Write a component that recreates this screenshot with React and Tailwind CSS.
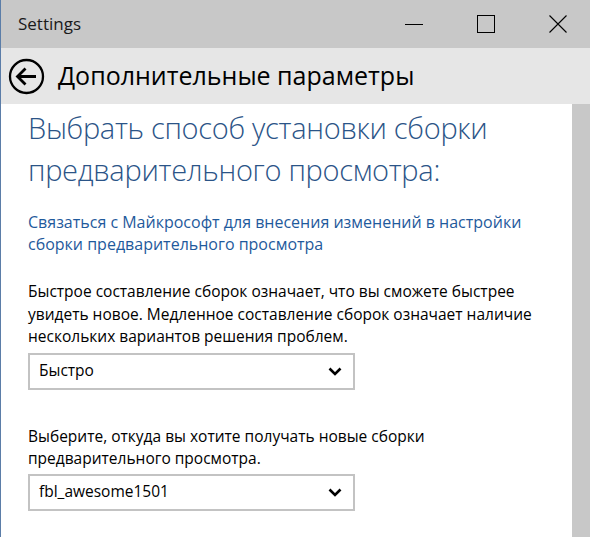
import React from "react"

const font = { fontFamily: '"Open Sans", "Noto Sans", Arial, sans-serif' }

function Chevron() {
  return (
    <svg width="14" height="9" viewBox="0 0 14 9" className="shrink-0">
      <polyline points="1.5,1.5 7,7 12.5,1.5" fill="none" stroke="#000" strokeWidth="2.6" />
    </svg>
  )
}

function Select({ value }) {
  return (
    <div className="w-[327px] h-[37px] border-2 border-[#c3c3c3] bg-white flex items-center justify-between pl-[9px] pr-[11px]">
      <span className="text-[15.5px] text-black leading-none">{value}</span>
      <Chevron />
    </div>
  )
}

export default function App() {
  return (
    <div className="w-[590px] h-[537px] overflow-hidden flex flex-col border-l border-[#5b7da8] bg-white" style={font}>
      {/* title bar */}
      <div className="h-[48px] bg-[#c8c8c8] flex items-center shrink-0">
        <span className="pl-[17px] text-[17px] text-[#1a1a1a] flex-1">Settings</span>
        <div className="flex items-center gap-[54px] mr-[23px]">
          <div className="w-[18px] h-[18px] flex items-center">
            <div className="w-[18px] h-px bg-black" />
          </div>
          <div className="w-[18px] h-[18px] border border-black" />
          <svg width="18" height="18" viewBox="0 0 18 18">
            <path d="M0.5 0.5 L17.5 17.5 M17.5 0.5 L0.5 17.5" stroke="#000" strokeWidth="1.1" />
          </svg>
        </div>
      </div>

      {/* header */}
      <div className="h-[56px] bg-[#e6e6e6] flex items-center shrink-0">
        <svg width="37" height="37" viewBox="0 0 37 37" className="ml-[7px]">
          <circle cx="18.5" cy="18.5" r="16.5" fill="none" stroke="#000" strokeWidth="2.3" />
          <path d="M9.5 18.5 H28 M17.5 10.5 L9.5 18.5 L17.5 26.5" fill="none" stroke="#000" strokeWidth="2.8" />
        </svg>
        <span className="ml-[13px] text-[25px] text-black">Дополнительные параметры</span>
      </div>

      {/* body */}
      <div className="flex flex-1 min-h-0">
        <div className="flex-1 pl-[27px] pt-[3px]">
          <h1 className="text-[29px] font-light leading-[42px] text-[#2b5487] tracking-[-0.3px]">
            Выбрать способ установки сборки
            <br />
            предварительного просмотра:
          </h1>
          <p className="mt-[20px] text-[16px] leading-[22px] text-[#1f5a9c]">
            Связаться с Майкрософт для внесения изменений в настройки
            <br />
            сборки предварительного просмотра
          </p>
          <p className="mt-[25px] text-[15.5px] leading-[22.5px] text-black">
            Быстрое составление сборок означает, что вы сможете быстрее
            <br />
            увидеть новое. Медленное составление сборок означает наличие
            <br />
            нескольких вариантов решения проблем.
          </p>
          <div className="mt-[5px]">
            <Select value="Быстро" />
          </div>
          <p className="mt-[35px] text-[15.5px] leading-[22.5px] text-black">
            Выберите, откуда вы хотите получать новые сборки
            <br />
            предварительного просмотра.
          </p>
          <div className="mt-[4px]">
            <Select value="fbl_awesome1501" />
          </div>
        </div>
        <div className="w-[18px] bg-[#c8c8c8] shrink-0" />
      </div>
    </div>
  )
}
